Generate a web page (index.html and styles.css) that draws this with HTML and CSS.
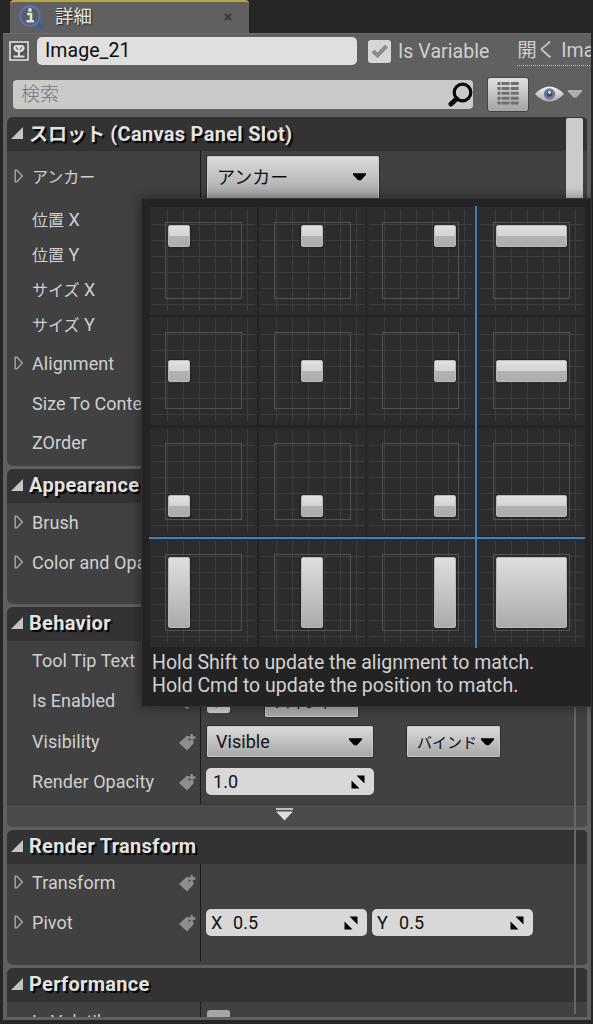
FILE: index.html
```
<!DOCTYPE html>
<html lang="ja">
<head>
<meta charset="UTF-8">
<meta name="viewport" content="width=device-width, initial-scale=1.0">
<title>詳細</title>
<link rel="stylesheet" href="styles.css">
</head>
<body>
<svg class="defs">
<linearGradient id="silver" x1="0" y1="0" x2="0" y2="1"><stop offset="0" stop-color="#f4f4f4"/><stop offset="1" stop-color="#aaa"/></linearGradient>
<symbol id="open" viewBox="0 0 12 12"><path d="M12 0V12H0Z" fill="#c4c4c4"/></symbol>
<symbol id="closed" viewBox="0 0 10 14"><path d="M1.2 1.3H3L8.3 7 3 12.7H1.2Z" fill="none" stroke="#a2a2a2" stroke-width="1.5"/></symbol>
<symbol id="tag" viewBox="0 0 17 18"><path d="M0 10 7.5 3H9.5V7.5H14.5V10.5L8 17.5Z" fill="#8e8e8e"/><path d="M12.7 1V8M9.2 4.5H16.5" stroke="#8e8e8e" stroke-width="2.4"/></symbol>
<symbol id="down" viewBox="0 0 14 8"><path d="M0 0H14V1.5L8.5 7.5H5.5L0 1.5Z"/></symbol>
<symbol id="spin" viewBox="0 0 14 14"><path d="M5.5 .5H13.5V8.5ZM.5 5.5V13.5H8.5Z"/></symbol>
</svg>

<div class="tab">
<svg class="info" width="27" height="27" viewBox="0 0 27 27"><path d="M18 19 24.5 25" stroke="#3c5c9e" stroke-width="4"/><circle cx="11" cy="12" r="9.8" fill="#5b5d63" stroke="#5474b8" stroke-width="2"/><path d="M8 10H12V17M7.5 17.2H15" fill="none" stroke="#ddd" stroke-width="2.6"/><circle cx="11" cy="6" r="1.9" fill="#ddd"/></svg>
<span class="jp">詳細</span>
<svg class="close" width="8" height="8" viewBox="0 0 8 8"><path d="M1 1 7 7M7 1 1 7" stroke="#3a3a3a" stroke-width="2.2"/></svg>
</div>

<div class="panel">
<div class="name-row">
<svg width="20" height="20" viewBox="0 0 20 20"><rect x="1" y="1" width="18" height="18" fill="#555" stroke="#ddd" stroke-width="1.6"/><path d="M4.5 15.5H15.5M10 11V15" stroke="#ddd" stroke-width="2"/><path d="M6.5 4H13.5Q16 5 15.5 8 14 11.5 10 11.5 6 11.5 4.5 8 4 5 6.5 4Z" fill="#ddd"/><path d="M7 6 9 9M11 9 13 6" stroke="#666" stroke-width="1.3"/></svg>
<div class="name-box">Image_21</div>
<div class="check"><svg width="18" height="16" viewBox="0 0 18 16"><path d="M2 8 6.5 12.5 15.5 3" fill="none" stroke="#8b8b8b" stroke-width="4"/></svg></div>
<span class="is-var">Is Variable</span>
<span class="open-link"><span class="jp">開く</span> Image</span>
</div>

<div class="search-row">
<div class="search"><span class="jp">検索</span><svg width="25" height="25" viewBox="0 0 25 25"><circle cx="14.5" cy="10.5" r="8.3" fill="none" stroke="#080808" stroke-width="3.2"/><path d="M8.5 17 3 22" stroke="#080808" stroke-width="5" stroke-linecap="round"/></svg></div>
<div class="grid-btn"><svg width="22" height="24" viewBox="0 0 22 24"><path d="M2 0V24" stroke="#666" stroke-width="3" stroke-dasharray="3 1.9"/><path d="M8.5 0V24M17.7 0V24" stroke="#707070" stroke-width="8" stroke-dasharray="3 1.9"/></svg></div>
<svg class="eye" width="29" height="18" viewBox="0 0 29 18"><path d="M0 9Q7 1.5 14.5 1.5T29 9Q22 16.5 14.5 16.5T0 9Z" fill="url(#silver)"/><circle cx="14.5" cy="9" r="5.7" fill="#6d7a9a"/><circle cx="14.5" cy="9" r="2.8" fill="#3d4a68"/><circle cx="14.5" cy="7.5" r="1.4" fill="#e5e8ee"/></svg>
<svg class="eye-arrow" width="14" height="8"><use href="#down"/></svg>
</div>

<div class="scroll">
<section>
<h2><svg><use href="#open"/></svg><span><span class="jp">スロット</span> (Canvas Panel Slot)</span></h2>
<div class="rows">
<div class="row h52"><svg class="exp"><use href="#closed"/></svg><label class="jp">アンカー</label><div class="val"><div class="btn anchor"><span class="jp">アンカー</span><svg class="down"><use href="#down"/></svg></div></div></div>
<div class="row h35"><label><span class="jp">位置</span> X</label><div class="val"></div></div>
<div class="row h35"><label><span class="jp">位置</span> Y</label><div class="val"></div></div>
<div class="row h35"><label><span class="jp">サイズ</span> X</label><div class="val"></div></div>
<div class="row h35"><label><span class="jp">サイズ</span> Y</label><div class="val"></div></div>
<div class="row h42"><svg class="exp"><use href="#closed"/></svg><label>Alignment</label><div class="val"></div></div>
<div class="row h38"><label>Size To Content</label><div class="val"></div></div>
<div class="row h40"><label>ZOrder</label><div class="val"></div></div>
</div>
</section>

<section class="appearance">
<h2><svg><use href="#open"/></svg><span>Appearance</span></h2>
<div class="rows">
<div class="row h39"><svg class="exp"><use href="#closed"/></svg><label>Brush</label><div class="val"></div></div>
<div class="row h41"><svg class="exp"><use href="#closed"/></svg><label>Color and Opacity</label><div class="val"></div></div>
</div>
</section>

<section class="behavior">
<h2><svg><use href="#open"/></svg><span>Behavior</span></h2>
<div class="rows">
<div class="row h40"><label>Tool Tip Text</label><svg class="tag"><use href="#tag"/></svg><div class="val"></div></div>
<div class="row h40"><label>Is Enabled</label><svg class="tag"><use href="#tag"/></svg><div class="val"><div class="check"><svg width="18" height="16" viewBox="0 0 18 16"><path d="M2 8 6.5 12.5 15.5 3" fill="none" stroke="#8b8b8b" stroke-width="4"/></svg></div><div class="btn bind first"><span class="jp">バインド</span><svg class="down"><use href="#down"/></svg></div></div></div>
<div class="row h41"><label>Visibility</label><svg class="tag"><use href="#tag"/></svg><div class="val"><div class="btn visible"><span>Visible</span><svg class="down"><use href="#down"/></svg></div><div class="btn bind"><span class="jp">バインド</span><svg class="down"><use href="#down"/></svg></div></div></div>
<div class="row h39"><label>Render Opacity</label><svg class="tag"><use href="#tag"/></svg><div class="val"><div class="num opacity"><span>1.0</span><svg class="spin"><use href="#spin"/></svg></div></div></div>
</div>
<div class="more"><svg width="17" height="13" viewBox="0 0 17 13"><path d="M0 1H17" stroke="#ddd" stroke-width="1.6"/><path d="M0 3.5H17L8.5 12.5Z" fill="#ddd"/></svg></div>
</section>

<section class="transform">
<h2><svg><use href="#open"/></svg><span>Render Transform</span></h2>
<div class="rows">
<div class="row h38"><svg class="exp"><use href="#closed"/></svg><label>Transform</label><svg class="tag"><use href="#tag"/></svg><div class="val"></div></div>
<div class="row h41"><svg class="exp"><use href="#closed"/></svg><label>Pivot</label><svg class="tag"><use href="#tag"/></svg><div class="val"><div class="num"><b>X</b><span>0.5</span><svg class="spin"><use href="#spin"/></svg></div><div class="num"><b>Y</b><span>0.5</span><svg class="spin"><use href="#spin"/></svg></div></div></div>
</div>
</section>

<section>
<h2><svg><use href="#open"/></svg><span>Performance</span></h2>
<div class="rows">
<div class="row h39"><label>Is Volatile</label><div class="val"><div class="check off"></div></div></div>
</div>
</section>
<div class="track"></div>
<div class="thumb"></div>
</div>
</div>

<div class="popup">
<div class="anchors">
<div class="cell"><div class="box"><i></i></div></div>
<div class="cell"><div class="box cx"><i></i></div></div>
<div class="cell"><div class="box rx"><i></i></div></div>
<div class="cell"><div class="box"><i class="wide"></i></div></div>
<div class="cell"><div class="box cy"><i></i></div></div>
<div class="cell"><div class="box cx cy"><i></i></div></div>
<div class="cell"><div class="box rx cy"><i></i></div></div>
<div class="cell"><div class="box cy"><i class="wide"></i></div></div>
<div class="cell"><div class="box by"><i></i></div></div>
<div class="cell"><div class="box cx by"><i></i></div></div>
<div class="cell"><div class="box rx by"><i></i></div></div>
<div class="cell"><div class="box by"><i class="wide"></i></div></div>
<div class="cell"><div class="box"><i class="tall"></i></div></div>
<div class="cell"><div class="box cx"><i class="tall"></i></div></div>
<div class="cell"><div class="box rx"><i class="tall"></i></div></div>
<div class="cell"><div class="box"><i class="wide tall"></i></div></div>
<div class="line-v"></div>
<div class="line-h"></div>
</div>
<p>Hold Shift to update the alignment to match.<br>Hold Cmd to update the position to match.</p>
</div>
</body>
</html>
```
FILE: styles.css
```
*{box-sizing:border-box;}
body{margin:0;width:593px;height:1024px;overflow:hidden;position:relative;background:#262626;color:#d0d0d0;font-family:Roboto,"Noto Sans CJK JP",sans-serif;font-size:18px;letter-spacing:0.05px;white-space:nowrap;}
svg{display:block;flex:none;}
.defs{position:absolute;width:0;height:0;}
.jp{font-family:"Noto Sans CJK JP",sans-serif;font-weight:400;letter-spacing:0;}

.tab{width:239px;height:33px;margin-left:10px;background:#606060;border-top:2px solid #b9a93a;border-radius:4px 4px 0 0;display:flex;align-items:center;padding:0 17px 2px 9px;}
.tab .info{margin-top:2px;}
.tab .jp{margin:-3px 0 0 9px;font-size:18.5px;color:#e4e4e4;text-shadow:1px 1px 1px #222;}
.tab .close{margin-left:auto;}

.panel{width:588px;height:987px;margin-left:3px;padding:3px 4px 0;background:#606060;border-top:1px solid #6c6c6c;overflow:hidden;}
.name-row{display:flex;align-items:center;height:28px;padding-left:2px;}
.name-box{flex:none;width:320px;height:28px;margin-left:8px;padding-left:8px;line-height:27px;background:#dfdfdf;border-radius:5px;color:#0c0c0c;font-size:19.5px;}
.check{width:23px;height:23px;background:#d6d6d6;border-radius:3px;display:flex;align-items:center;justify-content:center;flex:none;}
.check.off{background:#a6a6a6;}
.name-row .check{margin-left:11px;}
.is-var{margin-left:7px;font-size:19.5px;}
.open-link{margin-left:28px;height:30px;line-height:26px;border-bottom:1px dotted #bbb;font-size:19.5px;}

.search-row{display:flex;align-items:center;height:34px;margin-top:12px;padding-left:6px;}
.search{width:460px;height:29px;background:#cacaca;border-radius:4px;display:flex;align-items:center;justify-content:space-between;padding:0 0 0 8px;color:#8a8a8a;}
.search .jp{margin-top:-3px;font-size:19px;font-weight:300;color:#777;}
.grid-btn{width:42px;height:35px;margin-left:14px;border:1px solid #444;border-radius:3px;background:linear-gradient(#e0e0e0,#a4a4a4);display:flex;align-items:center;justify-content:center;}
.eye{margin-left:6px;}
.eye-arrow{margin-left:4px;fill:#b0b0b0;}

.scroll{position:relative;height:900px;margin-top:6px;overflow:hidden;}
section{width:581px;height:349px;margin-bottom:3px;background:#414141;border-radius:6px;overflow:hidden;}
.appearance{height:135px;}
.behavior{height:220px;}
.transform{height:135px;}
h2{margin:0;height:34px;padding:0 0 3px 4px;background:#333;display:flex;align-items:center;font-size:20px;font-weight:700;letter-spacing:0.3px;color:#e2e2e2;text-shadow:2px 2px 1px #000;}
h2 svg{width:12px;height:12px;margin-right:6px;}
h2 .jp{font-size:19px;font-weight:700;}
.rows{background:linear-gradient(90deg,transparent 193px,#1b1b1b 193px,#1b1b1b 194px,transparent 194px);}
.behavior .rows{height:163px;}
.transform .rows{height:97px;}
.row{display:flex;align-items:center;position:relative;padding-left:25px;}
.h35{height:35px;}
.h38{height:38px;}
.h39{height:39px;}
.h40{height:40px;}
.h41{height:41px;}
.h42{height:42px;}
.h52{height:52px;}
.exp{width:10px;height:14px;margin:-2px 8px 0 -18px;}
label{width:147px;margin-top:-1px;}
.h35 label,label.jp{margin-top:-3px;}
label.jp,label .jp{font-size:16px;}
.tag{width:17px;height:18px;}
.val{position:absolute;left:200px;display:flex;align-items:center;color:#111;}
.btn{height:31px;border-radius:2px;background:linear-gradient(#dcdcdc,#a6a6a6);box-shadow:0 0 0 1px #303030,inset 0 0 0 1px #c9c9c9;display:flex;align-items:center;justify-content:space-between;}
.down{width:13px;height:8px;}
.anchor{width:172px;height:43px;padding:0 13px 0 10px;}
.anchor .jp{margin-top:-3px;font-size:18px;}
.visible{width:166px;padding:0 11px 0 9px;}
.bind{width:93px;margin-left:34px;padding:0 6px 0 10px;}
.bind .jp{font-size:15px;}
.first{margin-left:35px;}
.num{width:161px;height:27px;margin:0 5px 0 -1px;padding:0 9px 0 5px;background:#d8d8d8;border-radius:5px;display:flex;align-items:center;}
.num + .num{margin-left:0;}
.num b{width:22px;font-weight:400;}
.num.opacity{width:168px;padding-left:7px;}
.spin{width:14px;height:14px;margin-left:auto;}
.more{height:23px;background:#4b4b4b;border-top:1px solid #383838;display:flex;align-items:center;justify-content:center;padding-right:26px;padding-bottom:3px;}
.track{position:absolute;left:567px;top:2px;width:2px;height:895px;background:#666;}
.thumb{position:absolute;left:559px;top:1px;width:17px;height:300px;background:#cbcbcb;border-radius:2px;}

/* anchor preset menu, hangs under the anchor button */
.popup{position:absolute;left:141px;top:198px;width:451px;height:509px;padding:8px;background:#232323;border:1px solid #333;box-shadow:0 0 12px rgba(0,0,0,0.45);}
.anchors{position:relative;display:grid;grid-template-columns:108.5px 108.5px 110.5px 107px;grid-template-rows:110px 110.5px 111.5px 109px;}
.cell{width:107px;height:108px;padding:15px 0 0 15px;background:#2c2c2c;position:relative;}
.cell::before{content:"";position:absolute;left:2px;top:2px;width:103px;height:102px;background:repeating-linear-gradient(90deg,transparent 0 15px,#3d3d3d 15px 16px),repeating-linear-gradient(transparent 0 15px,#3d3d3d 15px 16px);}
.box{position:relative;width:77px;height:77px;padding:2px;border:1px solid #525252;display:flex;}
.box i{width:22px;height:22px;border-radius:2px;border:1px solid #b8b8b8;background:linear-gradient(#e0e0e0,#d3d3d3 50%,#b2b2b2 50%,#adadad);box-shadow:0 0 2px #111;}
.box i.wide{width:71px;}
.box i.tall{height:71px;background:linear-gradient(#dedede,#ababab);}
.cx{justify-content:center;}
.rx{justify-content:flex-end;}
.cy{align-items:center;}
.by{align-items:flex-end;}
.line-v{position:absolute;left:325px;top:-1px;width:2px;height:442px;background:#3c82bc;}
.line-h{position:absolute;left:-1px;top:330px;width:436px;height:2px;background:#3c82bc;}
.popup p{margin:4px 0 0 2px;font-size:19.5px;letter-spacing:-0.03px;line-height:22.5px;color:#d2d2d2;}
```
